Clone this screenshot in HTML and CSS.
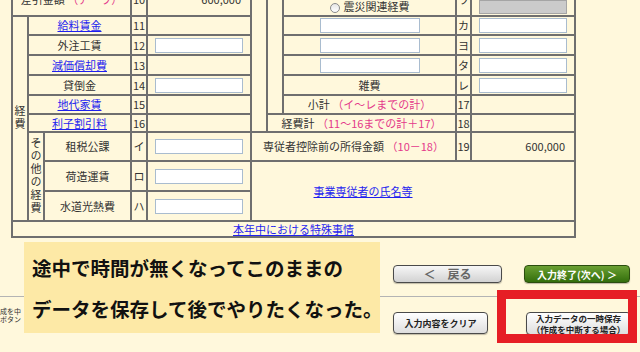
FILE: index.html
```html
<!DOCTYPE html>
<html lang="ja">

<head>
    <meta charset="UTF-8">
    <title>収支内訳書 入力</title>
    <link rel="stylesheet" href="styles.css">
</head>

<body>

    <table class="form">
        <colgroup>
            <col class="c-side">
            <col class="c-side">
            <col class="c-label">
            <col class="c-no">
            <col class="c-val">
            <col class="c-side">
            <col class="c-side">
            <col class="c-rlabel">
            <col class="c-rno">
            <col class="c-val">
        </colgroup>

        <tr class="h-top">
            <td colspan="3">差引金額 <span class="pk">（ア－ウ）</span></td>
            <td class="no">10</td>
            <td class="amt">600,000</td>
            <td rowspan="7"></td>
            <td rowspan="6"></td>
            <td class="bottom"><span class="radio"></span>震災関連経費</td>
            <td class="no">ワ</td>
            <td class="bottom"><span class="locked"></span></td>
        </tr>

        <tr class="h19">
            <td rowspan="9"><span class="vert">経費</span></td>
            <td colspan="2"><a href="#">給料賃金</a></td>
            <td class="no">11</td>
            <td></td>
            <td><input class="field wide" type="text"></td>
            <td class="no">カ</td>
            <td><input class="field" type="text"></td>
        </tr>

        <tr class="h20">
            <td colspan="2">外注工賃</td>
            <td class="no">12</td>
            <td><input class="field" type="text"></td>
            <td><input class="field wide" type="text"></td>
            <td class="no">ヨ</td>
            <td><input class="field" type="text"></td>
        </tr>

        <tr class="h20">
            <td colspan="2"><a href="#">減価償却費</a></td>
            <td class="no">13</td>
            <td></td>
            <td><input class="field wide" type="text"></td>
            <td class="no">タ</td>
            <td><input class="field" type="text"></td>
        </tr>

        <tr class="h20">
            <td colspan="2">貸倒金</td>
            <td class="no">14</td>
            <td><input class="field" type="text"></td>
            <td>雑費</td>
            <td class="no">レ</td>
            <td><input class="field" type="text"></td>
        </tr>

        <tr class="h19">
            <td colspan="2"><a href="#">地代家賃</a></td>
            <td class="no">15</td>
            <td></td>
            <td>小計 <span class="pk">（イ～レまでの計）</span></td>
            <td class="no">17</td>
            <td></td>
        </tr>

        <tr class="h18">
            <td colspan="2"><a href="#">利子割引料</a></td>
            <td class="no">16</td>
            <td></td>
            <td colspan="2">経費計 <span class="pk">（11～16までの計＋17）</span></td>
            <td class="no">18</td>
            <td></td>
        </tr>

        <tr class="h29">
            <td rowspan="3"><span class="vert">その他の経費</span></td>
            <td>租税公課</td>
            <td class="no">イ</td>
            <td><input class="field" type="text"></td>
            <td colspan="3">専従者控除前の所得金額 <span class="pk">（10－18）</span></td>
            <td class="no">19</td>
            <td class="amt">600,000</td>
        </tr>

        <tr class="h30">
            <td>荷造運賃</td>
            <td class="no">ロ</td>
            <td><input class="field" type="text"></td>
            <td colspan="5" rowspan="2" class="staff"><a href="#">事業専従者の氏名等</a></td>
        </tr>

        <tr class="h30">
            <td>水道光熱費</td>
            <td class="no">ハ</td>
            <td><input class="field" type="text"></td>
        </tr>

        <tr class="h16">
            <td colspan="10"><a href="#">本年中における特殊事情</a></td>
        </tr>
    </table>

    <div class="actions">
        <button class="btn btn-back">＜　戻る</button>
        <button class="btn btn-next">入力終了(次へ) ＞</button>
    </div>

    <hr class="sep">

    <div class="actions lower">
        <div class="note">成を中<br>ボタン</div>
        <div class="group">
            <button class="btn btn-clear">入力内容をクリア</button>
            <button class="btn btn-save">入力データの一時保存<br>（作成を中断する場合）</button>
        </div>
    </div>

    <div class="callout">途中で時間が無くなってこのままの<br>データを保存して後でやりたくなった。</div>
    <div class="highlight"></div>

</body>

</html>
```

FILE: styles.css
```css
body {
    margin: 0;
    width: 640px;
    height: 352px;
    overflow: hidden;
    position: relative;
    background-color: #fff8dc;
    color: #333;
    font-family: "Noto Sans CJK JP", "Noto Sans", sans-serif;
}

a {
    color: #1f1fef;
}

.pk {
    color: #e4398a;
}

/* main form table */
.form {
    border-collapse: collapse;
    table-layout: fixed;
    width: 565px;
    margin: -19px 0 0 11px;
    font-size: 11px;
}

.form td {
    border: 2px solid #6f6f6f;
    padding: 0;
    text-align: center;
    white-space: nowrap;
    line-height: 13px;
}

.c-side {
    width: 16px;
}

.c-label {
    width: 87px;
}

.c-no {
    width: 16px;
}

.c-val {
    width: 104px;
}

.c-rlabel {
    width: 173px;
}

.c-rno {
    width: 15px;
}

.h-top {
    height: 34px;
}

.h16 {
    height: 16px;
}

.h18 {
    height: 18px;
}

.h19 {
    height: 19px;
}

.h20 {
    height: 20px;
}

.h29 {
    height: 29px;
}

.h30 {
    height: 30px;
}

.form .amt {
    text-align: right;
    padding-right: 9px;
}

.form .bottom {
    vertical-align: bottom;
    padding-bottom: 1px;
}

.form .staff {
    padding-right: 100px;
}

.vert {
    display: inline-block;
    writing-mode: vertical-rl;
    text-orientation: upright;
    letter-spacing: 2px;
    line-height: 14px;
}

.field {
    display: block;
    box-sizing: border-box;
    width: 88px;
    height: 15px;
    margin: 0 auto;
    padding: 0;
    border: 1px solid #a9bccf;
    background-color: #fff;
}

.field.wide {
    width: 100px;
}

.radio {
    display: inline-block;
    box-sizing: border-box;
    width: 10px;
    height: 10px;
    margin: 0 4px 1px 0;
    vertical-align: middle;
    border: 1px solid #8a8a8a;
    border-radius: 50%;
    background: linear-gradient(#e6e6e6, #fff);
}

.locked {
    display: block;
    box-sizing: border-box;
    width: 88px;
    height: 14px;
    margin: 0 auto;
    border: 1px solid #a5a5a5;
    background-color: #cbcbcb;
}

/* buttons */
.actions {
    display: flex;
    justify-content: flex-end;
    gap: 22px;
    margin: 27px 10px 0 0;
}

.btn {
    box-sizing: border-box;
    padding: 0;
    border: 1px solid #4a4a4a;
    border-radius: 4px;
    font-family: "Noto Sans CJK JP", sans-serif;
    font-weight: bold;
    box-shadow: 0 1px 1px rgba(0, 0, 0, 0.25);
}

.btn-back {
    width: 109px;
    height: 18px;
    font-size: 12px;
    line-height: 14px;
    color: #666;
    background: linear-gradient(#f7f7f7, #d2d2d2);
}

.btn-next {
    width: 106px;
    height: 18px;
    font-size: 10px;
    color: #fff;
    border-color: #2b4d0e;
    background: linear-gradient(#6aa032, #336e0c);
}

.sep {
    margin: 13px 0 0;
    border: 0;
    border-top: 1px solid #b4b4b4;
}

.lower {
    justify-content: space-between;
    align-items: flex-start;
    margin: 15px 9px 0 0;
}

.note {
    width: 24px;
    overflow: hidden;
    margin-top: -5px;
    font-size: 7px;
    line-height: 8px;
    white-space: nowrap;
    color: #333;
}

.group {
    display: flex;
    gap: 38px;
}

.btn-clear {
    width: 95px;
    height: 22px;
    font-size: 9px;
    color: #222;
    background: linear-gradient(#fff, #dedede);
}

.btn-save {
    width: 105px;
    height: 23px;
    font-size: 8.5px;
    line-height: 11px;
    color: #222;
    background: linear-gradient(#fff, #dedede);
}

/* overlays */
.callout {
    position: absolute;
    left: 24px;
    top: 242px;
    box-sizing: border-box;
    width: 356px;
    height: 91px;
    padding: 5px 0 0 8px;
    background-color: #fde9a6;
    color: #111;
    font-size: 19.5px;
    font-weight: bold;
    line-height: 41px;
    white-space: nowrap;
}

.highlight {
    position: absolute;
    left: 497px;
    top: 290px;
    box-sizing: border-box;
    width: 140px;
    height: 53px;
    border: 9px solid #e61e25;
}
```
